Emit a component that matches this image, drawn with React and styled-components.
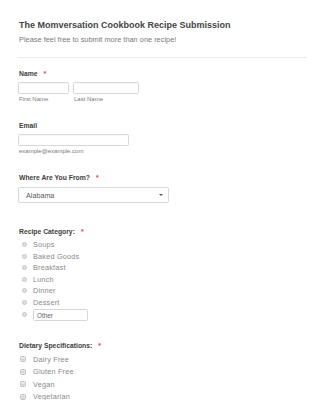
import React from 'react';
import styled, { createGlobalStyle } from 'styled-components';

const GlobalStyle = createGlobalStyle`
	body {
		margin: 0;
		background: #fff;
		font-family: 'Liberation Sans', Arial, sans-serif;
	}
`;

const Page = styled.div`
	padding: 19px 18px 0 18px;
	height: 400px;
	overflow: hidden;
	box-sizing: border-box;
`;

const Title = styled.h1`
	margin: 0 0 0 1px;
	font-size: 9px;
	line-height: 12px;
	font-weight: bold;
	color: #444;
`;

const Subtitle = styled.p`
	margin: 4px 0 0 1px;
	font-size: 7.4px;
	line-height: 10px;
	color: #7a7a7a;
`;

const Divider = styled.hr`
	margin: 12px 0 0 0;
	border: 0;
	border-top: 1px solid #ececec;
`;

const Field = styled.section`
	margin-top: ${props => props.gap}px;
`;

const Label = styled.div`
	margin-left: 1px;
	font-size: 6.8px;
	line-height: 10px;
	font-weight: bold;
	color: #3d3d3d;
	display: flex;
	align-items: center;

	span {
		color: #f23a3c;
		margin-left: 6px;
		font-size: 7px;
	}
`;

const Row = styled.div`
	display: flex;
	gap: 4px;
	margin-top: 3px;
`;

const Column = styled.div`
	display: flex;
	flex-direction: column;
`;

const Input = styled.div`
	width: ${props => props.w}px;
	height: 12px;
	box-sizing: border-box;
	border: 1px solid #d8d8d8;
	border-radius: 1.5px;
	background: #fff;
	box-shadow: inset 0 1px 1px rgba(0, 0, 0, 0.03);
`;

const SubLabel = styled.div`
	margin: 1px 0 0 1px;
	font-size: 6px;
	line-height: 8px;
	color: #7a7a7a;
`;

const Select = styled.div`
	margin-top: 4px;
	width: 151px;
	height: 16px;
	box-sizing: border-box;
	border: 1px solid #d8d8d8;
	border-radius: 2px;
	display: flex;
	align-items: center;
	justify-content: space-between;
	padding: 0 5px 0 7px;
	font-size: 7.2px;
	color: #5a5a5a;

	i {
		width: 0;
		height: 0;
		border-left: 2px solid transparent;
		border-right: 2px solid transparent;
		border-top: 2.5px solid #555;
	}
`;

const Options = styled.div`
	margin-top: 2px;
`;

const Option = styled.div`
	display: flex;
	align-items: center;
	height: ${props => props.h}px;
	font-family: 'Liberation Sans', Arial, sans-serif;
	font-size: 7.3px;
	color: #8a8a8a;
	letter-spacing: 0.2px;
`;

const Radio = styled.span`
	width: 5px;
	height: 5px;
	box-sizing: border-box;
	border-radius: 50%;
	border: 1px solid #c4c4c4;
	background: #e2e2e2;
	margin: 0 6.5px 0 3.5px;
	flex-shrink: 0;
	align-self: ${props => (props.top ? 'flex-start' : 'center')};
	margin-top: ${props => (props.top ? '4px' : '0')};
`;

const Check = styled.span`
	width: 6px;
	height: 6px;
	box-sizing: border-box;
	border-radius: 1.5px;
	border: 1px solid #c2c2c2;
	background: linear-gradient(#ececec, #dcdcdc);
	margin: 0 7px 0 2px;
	flex-shrink: 0;
	position: relative;

	&::after {
		content: '';
		position: absolute;
		left: 1px;
		right: 1px;
		top: 1.5px;
		border-top: 1px solid #cfcfcf;
	}
`;

const OtherInput = styled.div`
	width: 55px;
	height: 12px;
	box-sizing: border-box;
	border: 1px solid #d6d6d6;
	border-radius: 1.5px;
	font-size: 6.4px;
	color: #666;
	padding-left: 3px;
	display: flex;
	align-items: center;
	letter-spacing: 0;
`;

const categories = ['Soups', 'Baked Goods', 'Breakfast', 'Lunch', 'Dinner', 'Dessert'];
const dietary = ['Dairy Free', 'Gluten Free', 'Vegan', 'Vegetarian'];

export default function App() {
	return (
		<>
			<GlobalStyle />
			<Page>
				<Title>The Momversation Cookbook Recipe Submission</Title>
				<Subtitle>Please feel free to submit more than one recipe!</Subtitle>
				<Divider />

				<Field gap={11}>
					<Label>
						Name<span>*</span>
					</Label>
					<Row>
						<Column>
							<Input w={51} />
							<SubLabel>First Name</SubLabel>
						</Column>
						<Column>
							<Input w={66} />
							<SubLabel>Last Name</SubLabel>
						</Column>
					</Row>
				</Field>

				<Field gap={18}>
					<Label>Email</Label>
					<Row>
						<Column>
							<Input w={111} />
							<SubLabel>example@example.com</SubLabel>
						</Column>
					</Row>
				</Field>

				<Field gap={18}>
					<Label>
						Where Are You From?<span>*</span>
					</Label>
					<Select>
						Alabama
						<i />
					</Select>
				</Field>

				<Field gap={24}>
					<Label>
						Recipe Category:<span>*</span>
					</Label>
					<Options>
						{categories.map(c => (
							<Option key={c} h={11.5}>
								<Radio />
								{c}
							</Option>
						))}
						<Option h={14}>
							<Radio top />
							<OtherInput>Other</OtherInput>
						</Option>
					</Options>
				</Field>

				<Field gap={19}>
					<Label>
						Dietary Specifications:<span>*</span>
					</Label>
					<Options>
						{dietary.map(d => (
							<Option key={d} h={12.5}>
								<Check />
								{d}
							</Option>
						))}
					</Options>
				</Field>
			</Page>
		</>
	);
}
